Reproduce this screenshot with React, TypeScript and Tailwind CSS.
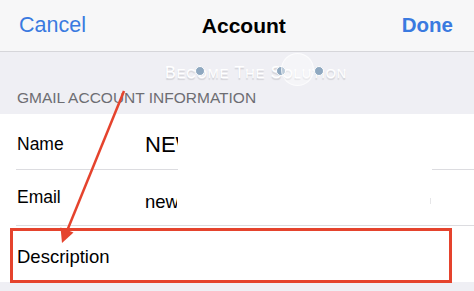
import React from "react";

const font = { fontFamily: '"Liberation Sans", Arial, sans-serif' };

function Separator({ gap }: { gap?: boolean }) {
    // the screenshot has a white redaction patch over the middle of the first separator
    if (gap) {
        return (
            <div className="flex h-px">
                <div className="ml-[16px] w-[162px] bg-[#dcdce0]" />
                <div className="ml-auto w-[42px] bg-[#dcdce0]" />
            </div>
        );
    }
    return <div className="ml-[16px] h-px bg-[#dcdce0]" />;
}

export default function App() {
    return (
        <div className="relative w-[474px] h-[291px] overflow-hidden bg-[#efeff4]" style={font}>
            {/* Nav bar */}
            <div className="h-[52px] flex items-center justify-between pl-[19px] pr-[21px] bg-[#f7f7f8] border-b border-[#d6d6da]">
                <span className="text-[21.5px] text-[#3a7ae0]">Cancel</span>
                <span className="text-[21px] font-bold text-black">Account</span>
                <span className="text-[20.5px] font-bold text-[#3a7ae0]">Done</span>
            </div>

            {/* Section header */}
            <div className="relative h-[62px] flex items-end pl-[17px] pb-[5px]">
                <span className="text-[15.5px] text-[#6d6d72]">GMAIL ACCOUNT INFORMATION</span>

                {/* watermark */}
                <div className="absolute left-[165px] top-[9px] flex items-center">
                    <span className="text-[16px] tracking-[1px] text-white [text-shadow:0_2px_1px_rgba(0,0,0,0.12)]">
                        B<span className="text-[13px]">ECOME</span> T<span className="text-[13px]">HE</span> S<span className="text-[13px]">OLUTION</span>
                    </span>
                </div>
                <div className="absolute left-[195px] top-[14px] w-[10px] h-[10px] rounded-full bg-[#8fa8c0] border border-white" />
                <div className="absolute left-[276px] top-[14px] w-[10px] h-[10px] rounded-full bg-[#8fa8c0] border border-white" />
                <div className="absolute left-[314px] top-[14px] w-[10px] h-[10px] rounded-full bg-[#8fa8c0] border border-white" />
                <div className="absolute left-[281px] top-[1px] w-[33px] h-[33px] rounded-full bg-white/40 border border-white/70" />
            </div>

            {/* Cells */}
            <div className="bg-white">
                <div className="h-[55px] flex items-center pt-[5px]">
                    <span className="pl-[17px] w-[145px] text-[17.5px] text-black">Name</span>
                    <span className="w-[33px] overflow-hidden whitespace-nowrap text-[22px] text-black">NEW</span>
                </div>
                <Separator gap />
                <div className="relative h-[55px] flex items-center">
                    <span className="pl-[17px] w-[145px] text-[17.5px] text-black">Email</span>
                    <span className="w-[32px] mt-[8px] overflow-hidden whitespace-nowrap text-[18.5px] text-black">new</span>
                    <div className="absolute left-[430px] top-[28px] w-px h-[6px] bg-[#e6e6e8]" />
                </div>
                <Separator />
                <div className="h-[56px] flex items-center pt-[6px]">
                    <span className="pl-[17px] text-[18.5px] text-black">Description</span>
                </div>
            </div>

            {/* Red highlight box */}
            <div className="absolute left-[10px] top-[228px] w-[442px] h-[55px] border-[3px] border-[#e5432d]" />

            {/* Red arrow */}
            <svg className="absolute inset-0 pointer-events-none" width="474" height="291" viewBox="0 0 474 291">
                <line x1="124" y1="91" x2="67" y2="231" stroke="#e5432d" strokeWidth="2.5" />
                <polygon points="62,243 73.5,232.5 60.5,227.5" fill="#e5432d" />
            </svg>
        </div>
    );
}
